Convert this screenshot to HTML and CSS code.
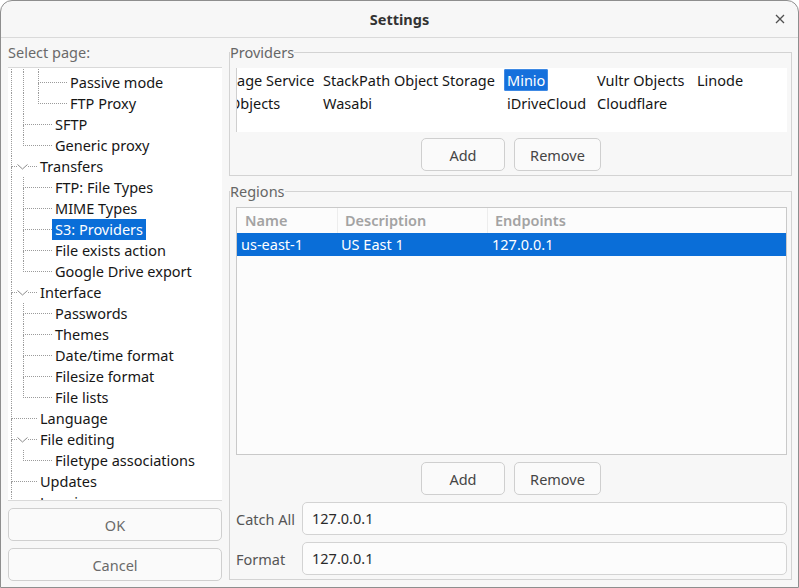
FILE: index.html
```html
<!DOCTYPE html>
<html lang="en">
<head>
<meta charset="utf-8">
<title>Settings</title>
<link rel="stylesheet" href="styles.css">
</head>
<body>
<div class="window">
  <header class="titlebar">
    <span class="title">Settings</span>
    <button class="close" aria-label="Close">
      <svg width="10" height="10" viewBox="0 0 10 10"><path d="M1 1L9 9M9 1L1 9" stroke="#505050" stroke-width="1.3" fill="none"/></svg>
    </button>
  </header>
  <div class="body">
    <aside class="sidebar">
      <div class="side-label">Select page:</div>
      <div class="tree">
        <ul class="tree-list">
          <li class="row"><span class="guide-a"></span><span class="guide-b"></span><span class="conn"><span class="conn-top"></span><span class="conn-bot"></span></span><span class="label"></span></li>
          <li class="row"><span class="guide-a"></span><span class="guide-b"></span><span class="conn"><span class="conn-top"></span><span class="conn-bot"></span></span><span class="label">Passive mode</span></li>
          <li class="row last"><span class="guide-a"></span><span class="guide-b"></span><span class="conn"><span class="conn-top"></span><span class="conn-bot"></span></span><span class="label">FTP Proxy</span></li>
          <li class="row"><span class="guide-a"></span><span class="conn"><span class="conn-top"></span><span class="conn-bot"></span></span><span class="label">SFTP</span></li>
          <li class="row last"><span class="guide-a"></span><span class="conn"><span class="conn-top"></span><span class="conn-bot"></span></span><span class="label">Generic proxy</span></li>
          <li class="row"><span class="conn conn-root"><span class="conn-top"></span><span class="conn-bot"></span><svg class="exp" width="11" height="6" viewBox="0 0 11 6"><path d="M0.5 0.5L5.5 5L10.5 0.5" stroke="#8a8a8a" stroke-width="1" fill="none"/></svg></span><span class="label">Transfers</span></li>
          <li class="row"><span class="guide-a"></span><span class="conn"><span class="conn-top"></span><span class="conn-bot"></span></span><span class="label">FTP: File Types</span></li>
          <li class="row"><span class="guide-a"></span><span class="conn"><span class="conn-top"></span><span class="conn-bot"></span></span><span class="label">MIME Types</span></li>
          <li class="row"><span class="guide-a"></span><span class="conn"><span class="conn-top"></span><span class="conn-bot"></span></span><span class="label is-selected">S3: Providers</span></li>
          <li class="row"><span class="guide-a"></span><span class="conn"><span class="conn-top"></span><span class="conn-bot"></span></span><span class="label">File exists action</span></li>
          <li class="row last"><span class="guide-a"></span><span class="conn"><span class="conn-top"></span><span class="conn-bot"></span></span><span class="label">Google Drive export</span></li>
          <li class="row"><span class="conn conn-root"><span class="conn-top"></span><span class="conn-bot"></span><svg class="exp" width="11" height="6" viewBox="0 0 11 6"><path d="M0.5 0.5L5.5 5L10.5 0.5" stroke="#8a8a8a" stroke-width="1" fill="none"/></svg></span><span class="label">Interface</span></li>
          <li class="row"><span class="guide-a"></span><span class="conn"><span class="conn-top"></span><span class="conn-bot"></span></span><span class="label">Passwords</span></li>
          <li class="row"><span class="guide-a"></span><span class="conn"><span class="conn-top"></span><span class="conn-bot"></span></span><span class="label">Themes</span></li>
          <li class="row"><span class="guide-a"></span><span class="conn"><span class="conn-top"></span><span class="conn-bot"></span></span><span class="label">Date/time format</span></li>
          <li class="row"><span class="guide-a"></span><span class="conn"><span class="conn-top"></span><span class="conn-bot"></span></span><span class="label">Filesize format</span></li>
          <li class="row last"><span class="guide-a"></span><span class="conn"><span class="conn-top"></span><span class="conn-bot"></span></span><span class="label">File lists</span></li>
          <li class="row"><span class="conn conn-root"><span class="conn-top"></span><span class="conn-bot"></span></span><span class="label">Language</span></li>
          <li class="row"><span class="conn conn-root"><span class="conn-top"></span><span class="conn-bot"></span><svg class="exp" width="11" height="6" viewBox="0 0 11 6"><path d="M0.5 0.5L5.5 5L10.5 0.5" stroke="#8a8a8a" stroke-width="1" fill="none"/></svg></span><span class="label">File editing</span></li>
          <li class="row last"><span class="guide-a"></span><span class="conn"><span class="conn-top"></span><span class="conn-bot"></span></span><span class="label">Filetype associations</span></li>
          <li class="row"><span class="conn conn-root"><span class="conn-top"></span><span class="conn-bot"></span></span><span class="label">Updates</span></li>
          <li class="row"><span class="conn conn-root"><span class="conn-top"></span><span class="conn-bot"></span></span><span class="label">Logging</span></li>
        </ul>
      </div>
      <button class="btn btn-wide">OK</button>
      <button class="btn btn-wide">Cancel</button>
    </aside>
    <main class="content">
      <fieldset class="group group-providers">
        <legend>Providers</legend>
        <div class="plist">
          <div class="pcol pcol-1"><span class="pitem">age Service</span><span class="pitem pitem-cut">Objects</span></div>
          <div class="pcol pcol-2"><span class="pitem">StackPath Object Storage</span><span class="pitem">Wasabi</span></div>
          <div class="pcol pcol-3"><span class="pitem is-current">Minio</span><span class="pitem">iDriveCloud</span></div>
          <div class="pcol pcol-4"><span class="pitem">Vultr Objects</span><span class="pitem">Cloudflare</span></div>
          <div class="pcol pcol-5"><span class="pitem">Linode</span></div>
        </div>
        <div class="btn-row">
          <button class="btn btn-add">Add</button>
          <button class="btn btn-remove">Remove</button>
        </div>
      </fieldset>
      <fieldset class="group group-regions">
        <legend>Regions</legend>
        <div class="rtable">
          <div class="rhead">
            <span class="hcell c-name">Name</span>
            <span class="hcell c-desc">Description</span>
            <span class="hcell c-end">Endpoints</span>
          </div>
          <div class="rrow is-selected">
            <span class="cell c-name">us-east-1</span>
            <span class="cell c-desc">US East 1</span>
            <span class="cell c-end">127.0.0.1</span>
          </div>
        </div>
        <div class="btn-row">
          <button class="btn btn-add">Add</button>
          <button class="btn btn-remove">Remove</button>
        </div>
        <div class="field">
          <span class="field-label">Catch All</span>
          <div class="input">127.0.0.1</div>
        </div>
        <div class="field">
          <span class="field-label">Format</span>
          <div class="input">127.0.0.1</div>
        </div>
      </fieldset>
    </main>
  </div>
</div>
</body>
</html>
```

FILE: styles.css
```css
* { box-sizing: border-box; }
html, body { margin: 0; padding: 0; background: #ffffff; }
body {
  font-family: "Noto Sans", "Open Sans", sans-serif;
  font-size: 14.5px;
  color: #1c1c1c;
}

.window {
  width: 799px;
  height: 588px;
  border: 1px solid #8e8e8e;
  border-radius: 12px 12px 0 0;
  background: #f7f7f7;
  display: flex;
  flex-direction: column;
  overflow: hidden;
}

/* title bar */
.titlebar {
  flex: none;
  height: 37px;
  border-bottom: 1px solid #dadada;
  display: grid;
  grid-template-columns: 1fr auto 1fr;
  align-items: center;
}
.title {
  grid-column: 2;
  font-weight: 700;
  color: #333333;
  font-size: 14.5px;
}
.close {
  grid-column: 3;
  justify-self: end;
  margin-right: 8px;
  width: 20px;
  height: 20px;
  border: 0;
  padding: 0;
  background: transparent;
  display: flex;
  align-items: center;
  justify-content: center;
}

/* body */
.body {
  flex: 1;
  display: flex;
  gap: 7px;
  padding: 0 6px 0 7px;
  min-height: 0;
}

/* sidebar */
.sidebar {
  width: 214px;
  flex: none;
  display: flex;
  flex-direction: column;
  padding-bottom: 6px;
}
.side-label {
  margin-top: 4px;
  line-height: 21px;
  color: #6a6a6a;
}
.tree {
  flex: 1;
  min-height: 0;
  margin-top: 4px;
  background: #ffffff;
  border-top: 1px solid #d9d9d9;
  border-bottom: 1px solid #d9d9d9;
  overflow: hidden;
}
.tree-list {
  list-style: none;
  margin: -17px 0 0 0;
  padding: 0;
}
.row {
  display: flex;
  height: 21px;
}
.guide-a {
  flex: none;
  margin-left: 3px;
  width: 12px;
  border-left: 1px dotted #9b9b9b;
}
.guide-b {
  flex: none;
  width: 15px;
  border-left: 1px dotted #9b9b9b;
}
.conn {
  flex: none;
  width: 29px;
  display: flex;
  flex-direction: column;
  position: relative;
}
.conn-root {
  margin-left: 3px;
  width: 26px;
}
.conn-top {
  height: 11px;
  border-left: 1px dotted #9b9b9b;
  border-bottom: 1px dotted #9b9b9b;
}
.conn-bot {
  flex: 1;
  border-left: 1px dotted #9b9b9b;
}
.row.last .conn-bot { border-left-color: transparent; }
.exp {
  position: absolute;
  left: 6px;
  top: 8px;
  background: #ffffff;
}
.label {
  padding: 0 3px;
  line-height: 21px;
  white-space: nowrap;
  color: #161616;
}
.label.is-selected {
  background: #0a6ed8;
  color: #ffffff;
}

/* buttons */
.btn {
  height: 33px;
  border: 1px solid #cfcfcf;
  border-radius: 5px;
  background: #fafafa;
  font: inherit;
  color: #454545;
  padding: 0;
}
.btn-wide {
  width: 100%;
  margin-top: 7px;
  flex: none;
  color: #6a6a6a;
}
.btn-add { width: 84px; }
.btn-remove { width: 87px; }

/* content */
.content {
  width: 563px;
  flex: none;
  display: flex;
  flex-direction: column;
}
.group {
  margin: 0;
  min-width: 0;
  border: 1px solid #d3d3d3;
  padding: 5px 4px 4px 6px;
}
.group legend {
  padding: 0;
  margin-left: -6px;
  line-height: 21px;
  color: #666666;
}
.group-providers { margin-top: 4px; }
.group-regions { margin-top: 5px; }

/* providers list */
.plist {
  height: 64px;
  background: #ffffff;
  border-left: 1px solid #cfcfcf;
  padding-top: 1px;
  display: flex;
  overflow: hidden;
}
.pcol {
  flex: none;
  display: flex;
  flex-direction: column;
  align-items: flex-start;
  gap: 1px;
}
.pcol-1 { width: 83px; overflow: hidden; }
.pcol-2 { width: 184px; }
.pcol-3 { width: 90px; }
.pcol-4 { width: 100px; }
.pitem {
  height: 22px;
  line-height: 22px;
  padding: 0 3px;
  white-space: nowrap;
  color: #161616;
}
.pcol-1 .pitem { padding-left: 0; }
.pcol-1 .pitem-cut { margin-left: -8px; }
.pitem.is-current {
  background: #1570dc;
  color: #ffffff;
  border-radius: 2px;
  box-shadow: inset 0 0 0 1px #3f8ae4;
}

.btn-row {
  display: flex;
  justify-content: center;
  gap: 9px;
  margin-top: 6px;
  padding-right: 1px;
}
.group-regions .btn-row { margin-top: 7px; }

/* regions table */
.rtable {
  height: 248px;
  border: 1px solid #c9c9c9;
  background: #fcfcfc;
}
.rhead {
  display: flex;
  height: 25px;
  color: #a3a3a3;
  font-weight: 600;
}
.hcell {
  line-height: 25px;
  padding-left: 8px;
}
.hcell + .hcell {
  border-left: 1px solid #ededed;
  padding-left: 7px;
}
.c-name { width: 100px; flex: none; }
.c-desc { width: 150px; flex: none; }
.c-end { flex: 1; }
.rrow {
  display: flex;
  height: 23px;
}
.cell {
  line-height: 23px;
  padding-left: 4px;
  white-space: nowrap;
}
.cell.c-end { padding-left: 5px; }
.rrow.is-selected {
  background: #0a6ed8;
  color: #ffffff;
}

/* fields */
.field {
  display: grid;
  grid-template-columns: 66px 1fr;
  align-items: center;
  margin-top: 7px;
}
.field-label {
  color: #555555;
  white-space: nowrap;
}
.input {
  height: 33px;
  border: 1px solid #d3d3d3;
  border-radius: 5px;
  background: #fcfcfc;
  padding-left: 9px;
  line-height: 31px;
  color: #2a2a2a;
}
```
